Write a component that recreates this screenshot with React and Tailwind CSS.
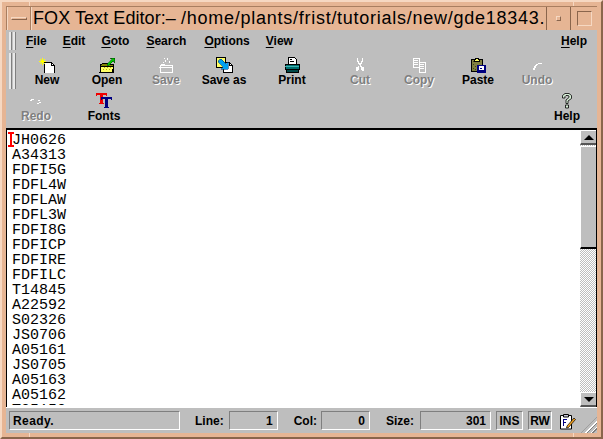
import React from 'react';

const LINES = ['JH0626', 'A34313', 'FDFI5G', 'FDFL4W', 'FDFLAW', 'FDFL3W', 'FDFI8G', 'FDFICP', 'FDFIRE', 'FDFILC', 'T14845', 'A22592', 'S02326', 'JS0706', 'A05161', 'JS0705', 'A05163', 'A05162', 'T05150'];

const sunken = 'border border-t-[#7f7f7f] border-l-[#7f7f7f] border-r-white border-b-white';

const Svg = ({ children }) => (
  <svg width="16" height="16" viewBox="0 0 16 16" shapeRendering="crispEdges" className="block">{children}</svg>
);

const NewIcon = () => (
  <svg width="17" height="16" viewBox="0 0 17 16" shapeRendering="crispEdges" className="block">
    <path d="M5 5H12L15 8V16H5Z" fill="#fff" stroke="#000" />
    <path d="M12 5V8H15" fill="none" stroke="#000" />
    <path d="M0 4H7V5H0ZM3 1H4V8H3ZM1 2H2V3H1ZM5 2H6V3H5ZM1 6H2V7H1ZM5 6H6V7H5Z" fill="#ffff00" />
    <path d="M2 3H5V6H2Z" fill="#ffff00" />
  </svg>
);

const OpenIcon = () => (
  <svg width="16" height="16" viewBox="0 0 16 16" shapeRendering="crispEdges" className="block">
    <path d="M1 7H3L4 6H8V7H14V15H1Z" fill="#808000" stroke="#000" />
    <path d="M2 9H15L13 15H1Z" fill="#ffff66" stroke="#000" />
    <path d="M5 10H6V11H5ZM8 10H9V11H8ZM11 10H12V11H11ZM4 12H5V13H4ZM7 12H8V13H7ZM10 12H11V13H10Z" fill="#b0b000" />
    <path d="M8 7L13 2L11 1H15.5V5.5L14.5 4L9 9Z" fill="#00c800" stroke="#004000" strokeWidth="0.5" />
  </svg>
);

const SaveIcon = () => (
  <Svg>
    <path d="M2 8H14V15H2ZM3 7H6V8H3Z" fill="none" stroke="#fff" />
    <path d="M1 10H15V11H1ZM6 1H7V2H6ZM9 1H10V3H9ZM7 3H8V5H7ZM11 4H12V6H11ZM5 5H6V6H5Z" fill="#fff" />
  </Svg>
);

const SaveAsIcon = () => (
  <svg width="17" height="16" viewBox="0 0 17 16" shapeRendering="crispEdges" className="block">
    <path d="M0 0H9V10H0Z" fill="#ffff66" stroke="#000" />
    <path d="M7 5H13L16 8V15H7Z" fill="#fff" stroke="#000" />
    <path d="M13 5V8H16" fill="none" stroke="#000" />
    <path d="M3 3L5 2L10 7L12 5V12H5L7 10L2 5Z" fill="#00a0f0" stroke="#004080" strokeWidth="0.6" />
  </svg>
);

const PrintIcon = () => (
  <Svg>
    <path d="M4 0H10L12 2V7H4Z" fill="#fff" stroke="#000" />
    <path d="M6 2H8V3H6ZM6 4H10V5H6Z" fill="#000" />
    <path d="M1 7H15V12H1Z" fill="#007070" stroke="#000" />
    <path d="M1 9H15V10H1Z" fill="#40b0b0" />
    <path d="M2 12H14V15H2Z" fill="#004848" stroke="#000" />
  </Svg>
);

const CutIcon = () => (
  <Svg>
    <path d="M5 0H6V3H7V5H9V3H10V0H11V4H10V6H9V8H10V9H12V13H10V12H9V9H8V7H7V12H6V13H4V9H6V8H7V6H6V4H5Z" fill="#fff" transform="translate(-0.5 1)" />
  </Svg>
);

const CopyIcon = () => (
  <Svg>
    <path d="M2 1H8V10H2ZM8 5H14V15H8Z" fill="none" stroke="#fff" />
    <path d="M3 3H7V4H3ZM3 5H7V6H3ZM3 7H7V8H3ZM9 7H13V8H9ZM9 9H13V10H9ZM9 11H13V12H9Z" fill="#fff" />
  </Svg>
);

const PasteIcon = () => (
  <Svg>
    <path d="M1 2H12V14H1Z" fill="#808040" stroke="#000" />
    <path d="M3 4H4V5H3ZM6 4H7V5H6ZM3 7H4V8H3ZM5 9H6V10H5ZM3 11H4V12H3ZM5 12H6V13H5Z" fill="#40401c" />
    <path d="M4 2H5V1H8V2H9V4H4Z" fill="#ffff66" stroke="#000" />
    <path d="M7 8H15.5V15.5H7Z" fill="#000080" />
    <path d="M9 9H13L14 10V13H9Z" fill="#fff" />
    <path d="M10 11H12V12H10Z" fill="#000080" />
  </Svg>
);

const UndoIcon = () => (
  <Svg>
    <path d="M9 6H13V7H9ZM7 7H9V8H7ZM6 8H8V9H6ZM5 9H7V11H5ZM4 11H6V13H4Z" fill="#fff" />
  </Svg>
);

const RedoIcon = () => (
  <Svg>
    <path d="M3 6H6V7H3ZM2 7H4V8H2ZM10 7H12V8H10ZM11 9H13V10H11ZM9 10H11V11H9Z" fill="#fff" />
  </Svg>
);

const FontsIcon = () => (
  <svg width="17" height="16" viewBox="0 0 17 16" shapeRendering="crispEdges" className="block">
    <path d="M0 0H11V3H10V2H7V10H8V11H3V10H4V2H1V3H0Z" fill="#f00000" />
    <path d="M5 4H16V7H15V6H12V14H13V15H8V14H9V6H6V7H5Z" fill="#000080" />
  </svg>
);

const HelpIcon = () => (
  <svg width="14" height="17" viewBox="0 0 14 17" className="block">
    <path d="M2.5 6V3.5L5 1.5H9L11.5 3.5V6.5L8 9V11.5H6V8L9 5.5V4L8 3.5H6L5 4.5V6Z" fill="#d8f0d8" stroke="#000" strokeWidth="0.8" />
    <path d="M5.5 13H8.5V16H5.5Z" fill="#d8f0d8" stroke="#000" strokeWidth="0.8" />
  </svg>
);

const NoteIcon = () => (
  <svg width="17" height="18" viewBox="0 0 17 18" className="block">
    <path d="M1.5 3.5H12.5V17H1.5Z" fill="#fff" stroke="#000" />
    <path d="M4.5 2.5H9.5V5H4.5Z" fill="#c8c8d8" stroke="#000" />
    <path d="M4 7H8V8H4ZM4 7H5V14H4ZM4 10H7V11H4Z" fill="#000080" />
    <path d="M8 14L15 6L16.5 7.5L9.5 15.5L7.5 16Z" fill="#f0a020" stroke="#000" strokeWidth="0.7" />
  </svg>
);

const ToolButton = ({ icon, label, width, disabled }) => (
  <div className={`flex flex-col items-center shrink-0 ${width}`}>
    <div className="h-[17px] flex items-center justify-center">{icon}</div>
    <span className={`text-[12px] leading-[14px] font-bold ${disabled ? 'text-[#7f7f7f] [text-shadow:1px_1px_0_#fff]' : 'text-black'}`}>{label}</span>
  </div>
);

const MenuItem = ({ first, rest, className = '' }) => (
  <span className={`text-[12px] leading-[14px] font-bold text-black ${className}`}>
    <span className="underline underline-offset-2">{first}</span>{rest}
  </span>
);

const Handle = ({ height }) => (
  <div className={`flex gap-[1px] shrink-0 ${height}`}>
    <div className="w-[3px] bg-[#e8e8e8] border-r border-[#7f7f7f]" />
    <div className="w-[3px] bg-[#e8e8e8] border-r border-[#7f7f7f]" />
  </div>
);

const Field = ({ label, value, labelClass, boxClass }) => (
  <>
    <span className={`text-[12px] font-bold ${labelClass}`}>{label}</span>
    <div className={`h-[19px] flex items-center justify-end pr-[4px] text-[12px] font-bold shrink-0 ${sunken} ${boxClass}`}>{value}</div>
  </>
);

export default function App() {
  return (
    <div className="relative w-[603px] h-[439px] overflow-hidden bg-[#e6b594] border-t-2 border-l-2 border-r-2 border-b-2 border-t-[#f6d8c2] border-l-[#f6d8c2] border-r-[#8a654c] border-b-[#8a654c] font-['Liberation_Sans',Arial,sans-serif] text-black">
      {/* title bar */}
      <div className="flex h-[24px] mt-[4px] ml-[4px] mr-[4px] border-t border-l border-t-[#a97e60] border-l-[#a97e60]">
        <div className="w-[24px] shrink-0 flex items-center justify-center border-r border-[#a97e60] border-l border-l-[#f6d8c2]">
          <div className="w-[16px] h-[3px] bg-[#e6b594] border border-t-[#f6d8c2] border-l-[#f6d8c2] border-r-[#8a654c] border-b-[#8a654c]" />
        </div>
        <div className="w-[516px] shrink-0 overflow-hidden whitespace-nowrap border-r border-[#8a654c] border-l border-l-[#f6d8c2] pl-[1px] text-[18px] leading-[22px] text-black">
          <span className="tracking-[0.07px]">FOX Text Editor:– </span>
          <span className="tracking-[0.74px]">/home/plants/frist/tutorials/new/gde18343.</span>
        </div>
        <div className="w-[24px] shrink-0 flex items-center justify-center border-r border-[#8a654c]">
          <div className="w-[3px] h-[3px] bg-[#e6b594] border border-t-[#f6d8c2] border-l-[#f6d8c2] border-r-[#8a654c] border-b-[#8a654c] box-content" />
        </div>
        <div className="flex-1 flex items-center justify-center">
          <div className="w-[15px] h-[15px] bg-[#e6b594] border border-t-[#8a654c] border-l-[#8a654c] border-r-[#f6d8c2] border-b-[#f6d8c2]" />
        </div>
      </div>

      {/* client area */}
      <div className="ml-[4px] w-[591px] h-[403px] bg-[#bebebe] flex flex-col">
        <div className="flex items-center h-[22px] pl-[3px] shrink-0">
          <Handle height="h-[18px]" />
          <MenuItem first="F" rest="ile" className="ml-[10px]" />
          <MenuItem first="E" rest="dit" className="ml-[16px]" />
          <MenuItem first="G" rest="oto" className="ml-[16px]" />
          <MenuItem first="S" rest="earch" className="ml-[17px]" />
          <MenuItem first="O" rest="ptions" className="ml-[18px]" />
          <MenuItem first="V" rest="iew" className="ml-[16px]" />
          <MenuItem first="H" rest="elp" className="ml-auto mr-[10px]" />
        </div>

        <div className="flex h-[76px] pl-[3px] pt-[1px] shrink-0">
          <Handle height="h-[36px]" />
          <div className="flex flex-col ml-[5px]">
            <div className="flex h-[37px] pt-[3px]">
              <ToolButton width="w-[52px]" label="New" icon={<NewIcon />} />
              <ToolButton width="w-[68px]" label="Open" icon={<OpenIcon />} />
              <ToolButton width="w-[50px]" label="Save" disabled icon={<SaveIcon />} />
              <ToolButton width="w-[66px]" label="Save as" icon={<SaveAsIcon />} />
              <ToolButton width="w-[70px]" label="Print" icon={<PrintIcon />} />
              <ToolButton width="w-[66px]" label="Cut" disabled icon={<CutIcon />} />
              <ToolButton width="w-[52px]" label="Copy" disabled icon={<CopyIcon />} />
              <ToolButton width="w-[66px]" label="Paste" icon={<PasteIcon />} />
              <ToolButton width="w-[52px]" label="Undo" disabled icon={<UndoIcon />} />
            </div>
            <div className="flex w-[561px] pt-[2px]">
              <ToolButton width="w-[30px]" label="Redo" disabled icon={<RedoIcon />} />
              <ToolButton width="w-[106px]" label="Fonts" icon={<FontsIcon />} />
              <div className="ml-auto">
                <ToolButton width="w-[30px]" label="Help" icon={<HelpIcon />} />
              </div>
            </div>
          </div>
        </div>

        {/* editor */}
        <div className="flex h-[279px] shrink-0 border-t-2 border-l border-black">
          <div className="relative flex-1 bg-white flex flex-col pb-[2px]">
            <div className="flex-1 overflow-hidden pl-[5px] pt-[3px] font-['Liberation_Mono','Courier_New',monospace] text-[15px] leading-[15px] text-black">
              {LINES.map((line, i) => (
                <div key={i}>{line}</div>
              ))}
            </div>
            <div className="absolute left-[1px] top-[2px] w-[6px] h-[15px] border-t-2 border-b-2 border-[#ff0000] flex justify-center">
              <div className="w-[2px] h-full bg-[#ff0000]" />
            </div>
          </div>
          <div className="w-[17px] shrink-0 flex flex-col border-r border-black bg-[repeating-conic-gradient(#bebebe_0_25%,#fff_0_50%)] bg-[length:2px_2px]">
            <div className="h-[15px] bg-[#bebebe] flex items-center justify-center border-t border-l border-white border-b-2 border-b-[#555] shrink-0">
              <div className="w-0 h-0 border-x-[5px] border-x-transparent border-b-[5px] border-b-black" />
            </div>
            <div className="h-[103px] mt-[1px] bg-[#bebebe] border-t border-l border-white border-b-2 border-b-black shrink-0" />
            <div className="mt-auto h-[15px] bg-[#bebebe] flex items-center justify-center border-t border-l border-white border-b-2 border-b-[#555] shrink-0">
              <div className="w-0 h-0 border-x-[5px] border-x-transparent border-t-[5px] border-t-black" />
            </div>
          </div>
        </div>

        {/* status bar */}
        <div className="flex items-center h-[26px] pl-[3px] border-t border-white shrink-0">
          <div className={`h-[19px] w-[171px] flex items-center pl-[3px] text-[12px] font-bold tracking-[0.4px] shrink-0 ${sunken}`}>Ready.</div>
          <Field label="Line:" value="1" labelClass="ml-[15px]" boxClass="ml-[5px] w-[49px]" />
          <Field label="Col:" value="0" labelClass="ml-[16px]" boxClass="ml-[4px] w-[49px]" />
          <Field label="Size:" value="301" labelClass="ml-[16px]" boxClass="ml-[6px] w-[71px]" />
          <div className={`ml-[5px] w-[27px] h-[19px] flex items-center justify-center text-[12px] font-bold shrink-0 ${sunken}`}>INS</div>
          <div className={`ml-[5px] w-[24px] h-[19px] flex items-center justify-center text-[12px] font-bold shrink-0 ${sunken}`}>RW</div>
          <div className="ml-[7px] shrink-0"><NoteIcon /></div>
          <div className="ml-auto self-end w-[16px] h-[16px] bg-[repeating-linear-gradient(135deg,#bebebe_0_2px,#fff_2px_3px,#7f7f7f_3px_4px)] [clip-path:polygon(100%_0,100%_100%,0_100%)] shrink-0" />
        </div>
      </div>

      {/* frame notches */}
      <div className="absolute left-[27px] top-0 w-px h-[4px] bg-[#f6d8c2]" />
      <div className="absolute left-[571px] top-0 w-px h-[4px] bg-[#f6d8c2]" />
      <div className="absolute left-[27px] bottom-0 w-px h-[4px] bg-[#f6d8c2]" />
      <div className="absolute left-[571px] bottom-0 w-px h-[4px] bg-[#f6d8c2]" />
    </div>
  );
}
